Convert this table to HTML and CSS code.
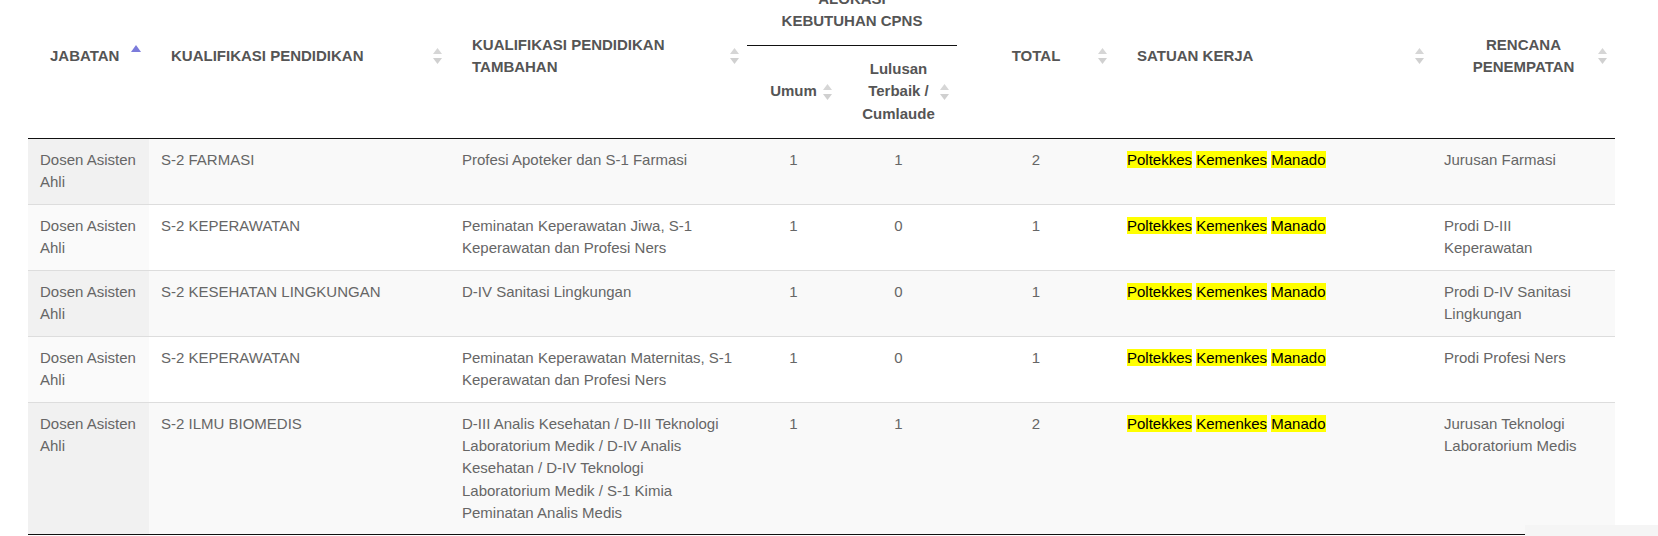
FILE: index.html
```html
<!DOCTYPE html>
<html lang="id">
<head>
<meta charset="utf-8">
<title>Formasi CPNS</title>
<link rel="stylesheet" href="styles.css">
</head>
<body>
<div class="page">
  <table class="formasi">
    <colgroup>
      <col class="w-jab">
      <col class="w-kual">
      <col class="w-tamb">
      <col class="w-umum">
      <col class="w-lulus">
      <col class="w-total">
      <col class="w-satker">
      <col class="w-rencana">
    </colgroup>
    <thead>
      <tr>
        <th rowspan="2" class="left">JABATAN<svg class="sort asc" width="10" height="18" viewBox="0 0 10 18"><path class="act" d="M0 5L5 -2L10 5Z"/></svg></th>
        <th rowspan="2" class="left">KUALIFIKASI PENDIDIKAN<svg class="sort" width="9" height="18" viewBox="0 0 9 18"><path class="up" d="M0 7L4.5 1L9 7Z"/><path class="dn" d="M0 11H9L4.5 17Z"/></svg></th>
        <th rowspan="2" class="left">KUALIFIKASI PENDIDIKAN TAMBAHAN<svg class="sort" width="9" height="18" viewBox="0 0 9 18"><path class="up" d="M0 7L4.5 1L9 7Z"/><path class="dn" d="M0 11H9L4.5 17Z"/></svg></th>
        <th colspan="2" class="group">ALOKASI KEBUTUHAN CPNS</th>
        <th rowspan="2">TOTAL<svg class="sort" width="9" height="18" viewBox="0 0 9 18"><path class="up" d="M0 7L4.5 1L9 7Z"/><path class="dn" d="M0 11H9L4.5 17Z"/></svg></th>
        <th rowspan="2" class="left">SATUAN KERJA<svg class="sort" width="9" height="18" viewBox="0 0 9 18"><path class="up" d="M0 7L4.5 1L9 7Z"/><path class="dn" d="M0 11H9L4.5 17Z"/></svg></th>
        <th rowspan="2">RENCANA PENEMPATAN<svg class="sort" width="9" height="18" viewBox="0 0 9 18"><path class="up" d="M0 7L4.5 1L9 7Z"/><path class="dn" d="M0 11H9L4.5 17Z"/></svg></th>
      </tr>
      <tr>
        <th>Umum<svg class="sort" width="9" height="18" viewBox="0 0 9 18"><path class="up" d="M0 7L4.5 1L9 7Z"/><path class="dn" d="M0 11H9L4.5 17Z"/></svg></th>
        <th>Lulusan Terbaik / Cumlaude<svg class="sort" width="9" height="18" viewBox="0 0 9 18"><path class="up" d="M0 7L4.5 1L9 7Z"/><path class="dn" d="M0 11H9L4.5 17Z"/></svg></th>
      </tr>
    </thead>
    <tbody>
      <tr class="odd">
        <td class="sorted">Dosen Asisten Ahli</td>
        <td>S-2 FARMASI</td>
        <td class="extra">Profesi Apoteker dan S-1 Farmasi</td>
        <td class="num">1</td>
        <td class="num">1</td>
        <td class="num">2</td>
        <td><mark class="hl">Poltekkes</mark> <mark class="hl">Kemenkes</mark> <mark class="hl">Manado</mark></td>
        <td class="place">Jurusan Farmasi</td>
      </tr>
      <tr class="even">
        <td class="sorted">Dosen Asisten Ahli</td>
        <td>S-2 KEPERAWATAN</td>
        <td class="extra">Peminatan Keperawatan Jiwa, S-1 Keperawatan dan Profesi Ners</td>
        <td class="num">1</td>
        <td class="num">0</td>
        <td class="num">1</td>
        <td><mark class="hl">Poltekkes</mark> <mark class="hl">Kemenkes</mark> <mark class="hl">Manado</mark></td>
        <td class="place">Prodi D-III Keperawatan</td>
      </tr>
      <tr class="odd">
        <td class="sorted">Dosen Asisten Ahli</td>
        <td>S-2 KESEHATAN LINGKUNGAN</td>
        <td class="extra">D-IV Sanitasi Lingkungan</td>
        <td class="num">1</td>
        <td class="num">0</td>
        <td class="num">1</td>
        <td><mark class="hl">Poltekkes</mark> <mark class="hl">Kemenkes</mark> <mark class="hl">Manado</mark></td>
        <td class="place">Prodi D-IV Sanitasi Lingkungan</td>
      </tr>
      <tr class="even">
        <td class="sorted">Dosen Asisten Ahli</td>
        <td>S-2 KEPERAWATAN</td>
        <td class="extra">Peminatan Keperawatan Maternitas, S-1 Keperawatan dan Profesi Ners</td>
        <td class="num">1</td>
        <td class="num">0</td>
        <td class="num">1</td>
        <td><mark class="hl">Poltekkes</mark> <mark class="hl">Kemenkes</mark> <mark class="hl">Manado</mark></td>
        <td class="place">Prodi Profesi Ners</td>
      </tr>
      <tr class="odd">
        <td class="sorted">Dosen Asisten Ahli</td>
        <td>S-2 ILMU BIOMEDIS</td>
        <td class="extra">D-III Analis Kesehatan / D-III Teknologi Laboratorium Medik / D-IV Analis Kesehatan / D-IV Teknologi Laboratorium Medik / S-1 Kimia Peminatan Analis Medis</td>
        <td class="num">1</td>
        <td class="num">1</td>
        <td class="num">2</td>
        <td><mark class="hl">Poltekkes</mark> <mark class="hl">Kemenkes</mark> <mark class="hl">Manado</mark></td>
        <td class="place">Jurusan Teknologi Laboratorium Medis</td>
      </tr>
    </tbody>
  </table>
</div>
<div class="corner-widget"></div>
</body>
</html>
```

FILE: styles.css
```css
html, body {
  margin: 0;
  padding: 0;
  background: #ffffff;
}

body {
  font-family: "Liberation Sans", Arial, sans-serif;
  font-size: 15px;
  line-height: 22.33px;
  color: #666666;
  overflow: hidden;
}

.page {
  margin-top: -25px;
  padding-left: 28px;
}

.formasi {
  width: 1587px;
  table-layout: fixed;
  border-collapse: separate;
  border-spacing: 0;
}

.w-jab { width: 121px; }
.w-kual { width: 301px; }
.w-tamb { width: 297px; }
.w-umum { width: 93px; }
.w-lulus { width: 117px; }
.w-total { width: 158px; }
.w-satker { width: 317px; }
.w-rencana { width: 183px; }

.formasi th {
  position: relative;
  padding: 12.5px 22px;
  font-weight: bold;
  color: #555555;
  text-align: center;
  vertical-align: middle;
  border-bottom: 1px solid #111111;
}

.formasi th.left {
  text-align: left;
}

.formasi th.group {
  padding-left: 30px;
  padding-right: 30px;
}

.sort {
  position: absolute;
  right: 8px;
  top: 50%;
  transform: translateY(-50%);
  display: block;
  overflow: visible;
}

.sort .up { fill: #d6d6d6; }
.sort .dn { fill: #d0d0d0; }
.sort .act { fill: #7b7bdb; }

.formasi td {
  padding: 10.17px 12px;
  vertical-align: top;
  text-align: left;
  background: #ffffff;
}

.formasi td.sorted {
  padding-right: 10px;
}

.formasi td.extra {
  padding-right: 13.5px;
}

.formasi td.place {
  padding-right: 20px;
}

.formasi td.num {
  text-align: center;
}

.formasi tbody tr + tr td {
  border-top: 1px solid #dddddd;
}

.formasi tbody tr:last-child td {
  border-bottom: 1px solid #111111;
}

.formasi tr.odd td {
  background: #f9f9f9;
}

.formasi tr.odd td.sorted {
  background: #f1f1f1;
}

.formasi tr.even td.sorted {
  background: #fafafa;
}

.hl {
  background: #ffff00;
  color: #000000;
}

.corner-widget {
  position: fixed;
  left: 1525px;
  top: 525px;
  width: 133px;
  height: 20px;
  background: #f5f5f5;
}
```
